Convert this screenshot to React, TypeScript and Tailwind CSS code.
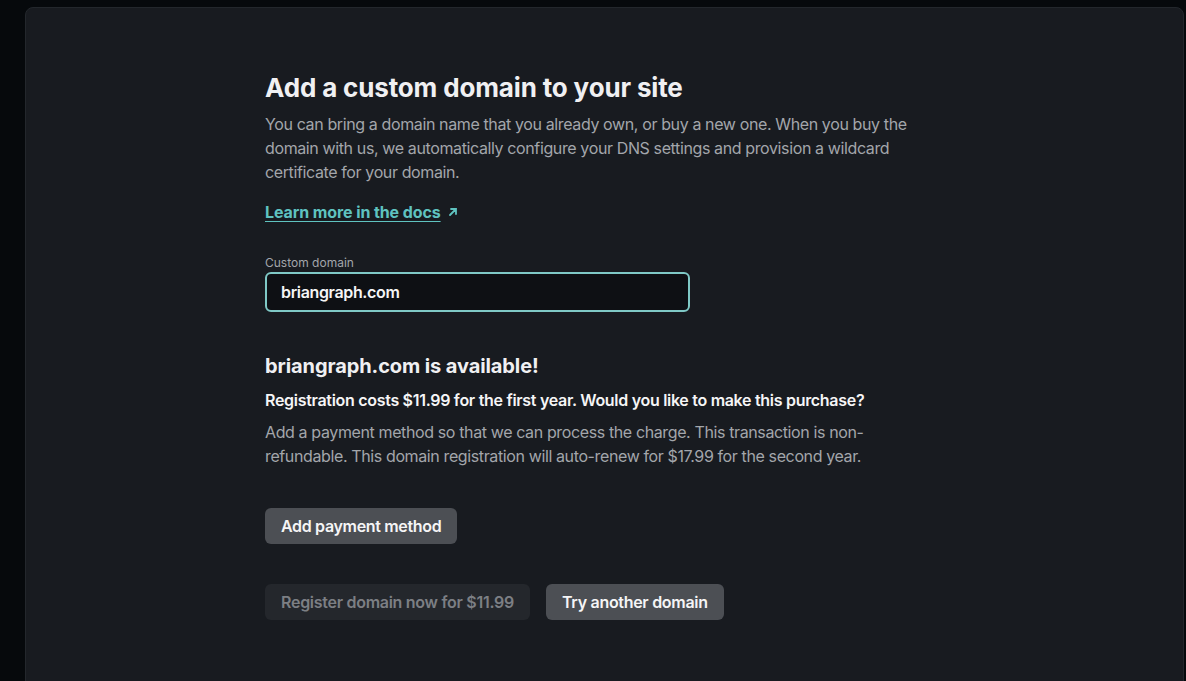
export default function App() {
  return (
    <div
      className="w-[1186px] h-[681px] overflow-hidden bg-[#06090c] pt-[7px] pl-[25px]"
      style={{ fontFamily: "Inter, 'Noto Sans', sans-serif" }}
    >
      <div className="w-[1159px] h-[700px] rounded-[8px] border border-[#23272c] bg-[#181b20] pl-[239px] pt-[64px]">
        <div className="w-[662px]">
          <h1 className="text-[26px] leading-[32px] font-bold text-[#f0f0f2] tracking-[-0.15px]">
            Add a custom domain to your site
          </h1>
          <p className="mt-[8px] text-[16px] leading-[24px] text-[#a3a6ab] tracking-[-0.38px]">
            You can bring a domain name that you already own, or buy a new one. When you buy the
            domain with us, we automatically configure your DNS settings and provision a wildcard
            certificate for your domain.
          </p>
          <a
            href="#"
            className="mt-[16px] inline-flex items-center gap-[5px] text-[16px] leading-[24px] font-bold text-[#5fc3c0] tracking-[-0.1px]"
          >
            <span className="underline underline-offset-[3px]">Learn more in the docs</span>
            <svg width="14" height="14" viewBox="0 0 14 14" fill="none" stroke="#5fc3c0" strokeWidth="1.8" strokeLinecap="round">
              <path d="M4 10L10 4M5 4h5v5" />
            </svg>
          </a>
          <label className="mt-[31px] block text-[12px] leading-[16px] text-[#a3a6ab]">
            Custom domain
          </label>
          <div className="mt-[1px] w-[425px] h-[40px] rounded-[6px] border-2 border-[#7fc9c6] bg-[#0e1014] flex items-center px-[14px]">
            <span className="text-[16px] font-semibold text-[#f5f5f6] tracking-[-0.35px]">briangraph.com</span>
          </div>
          <h2 className="mt-[40px] text-[20px] leading-[28px] font-bold text-[#f0f0f2] tracking-[-0.1px]">
            briangraph.com is available!
          </h2>
          <p className="mt-[8px] text-[16px] leading-[24px] font-semibold text-[#f5f5f6] tracking-[-0.3px]">
            Registration costs $11.99 for the first year. Would you like to make this purchase?
          </p>
          <p className="mt-[8px] text-[16px] leading-[24px] text-[#a3a6ab] tracking-[-0.38px]">
            Add a payment method so that we can process the charge. This transaction is non-refundable. This domain registration will auto-renew for $17.99 for the second year.
          </p>
          <button className="mt-[40px] h-[36px] px-[16px] rounded-[6px] bg-[#4c4f54] text-[16px] font-semibold text-[#f5f5f6] tracking-[-0.33px]">
            Add payment method
          </button>
          <div className="mt-[40px] flex gap-[16px]">
            <button className="h-[36px] px-[16px] rounded-[6px] bg-[#24272c] text-[16px] font-semibold text-[#7c7f84] tracking-[-0.28px]">
              Register domain now for $11.99
            </button>
            <button className="h-[36px] px-[16px] rounded-[6px] bg-[#4c4f54] text-[16px] font-semibold text-[#f5f5f6] tracking-[-0.3px]">
              Try another domain
            </button>
          </div>
        </div>
      </div>
    </div>
  );
}
